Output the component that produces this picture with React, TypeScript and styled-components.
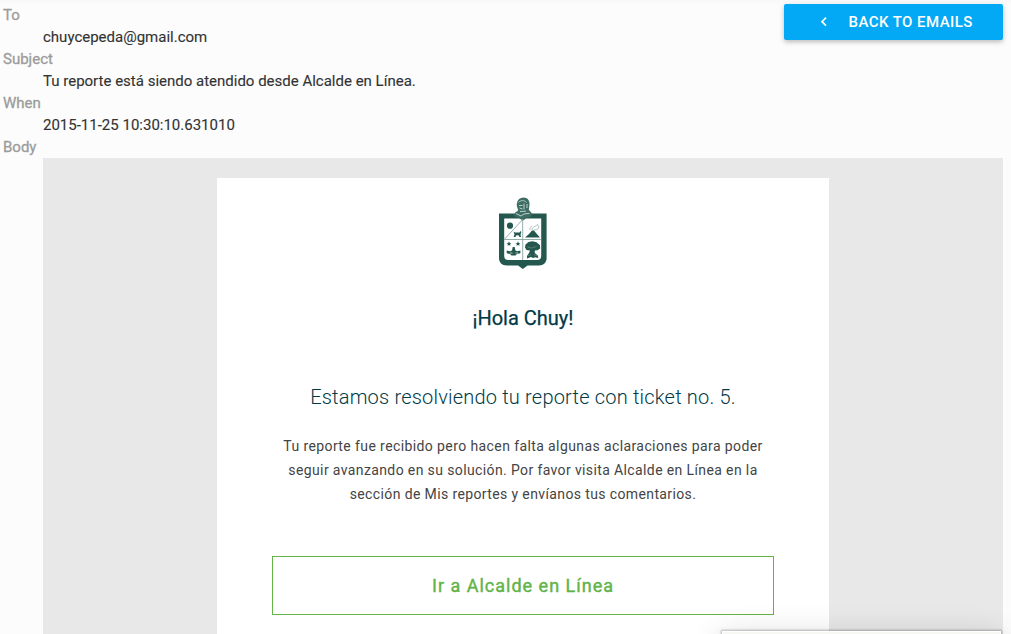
import React from "react";
import styled, { createGlobalStyle } from "styled-components";

const GlobalStyle = createGlobalStyle`
  * { box-sizing: border-box; }
  html, body { margin: 0; height: 100%; overflow: hidden; }
  body { background: #fcfcfc; font-family: Roboto, sans-serif; color: #333; }
`;

const Page = styled.main`
  position: relative;
  height: 634px;
  overflow: hidden;
  padding: 4px 8px 0 3px;
  background: linear-gradient(#f8f8f8, #fcfcfc 5px);
`;

const Header = styled.header`
  display: flex;
  justify-content: space-between;
  align-items: flex-start;
`;

const Details = styled.dl`
  margin: 0;
  font-size: 15px;
  line-height: 22px;
`;

const Term = styled.dt`
  color: #9b9b9b;
  font-weight: 400;
  -webkit-text-stroke: 0.3px currentColor;
`;

const Value = styled.dd`
  margin: 0 0 0 40px;
  white-space: nowrap;
  -webkit-text-stroke: 0.12px currentColor;
`;

const BackButton = styled.button`
  display: flex;
  align-items: center;
  width: 219px;
  height: 36px;
  padding: 0 0 0 35px;
  gap: 19.5px;
  border: 0;
  border-radius: 2px;
  background: #03a9f4;
  color: #fff;
  font: 500 15px/36px Roboto, sans-serif;
  letter-spacing: 0.45px;
  white-space: nowrap;
  box-shadow: 0 2px 5px rgba(0, 0, 0, 0.26);
`;

const EmailBody = styled.section`
  display: flex;
  justify-content: center;
  align-items: flex-start;
  height: 500px;
  margin-left: 40px;
  padding-top: 20px;
  background: #e8e8e8;
`;

const Card = styled.article`
  display: flex;
  flex-direction: column;
  align-items: center;
  width: 612px;
  height: 480px;
  padding-top: 18px;
  background: #fff;
  color: #003a46;
  text-align: center;
`;

const Greeting = styled.h1`
  margin: 33px 0 0;
  font-size: 20px;
  line-height: 30px;
  font-weight: 400;
  -webkit-text-stroke: 0.25px currentColor;
`;

const Lead = styled.h2`
  margin: 49px 0 0;
  font-size: 20px;
  line-height: 30px;
  font-weight: 300;
  letter-spacing: 0.2px;
  white-space: nowrap;
`;

const Message = styled.p`
  margin: 22px 0 0;
  color: #444;
  font-size: 14px;
  line-height: 24px;
`;

const Line = styled.span<{ $spacing: number }>`
  display: block;
  white-space: nowrap;
  letter-spacing: ${(p) => p.$spacing}px;
`;

const Action = styled.a`
  width: 502px;
  height: 59px;
  margin-top: 50px;
  border: 1px solid #62b348;
  color: #62b348;
  font-size: 18px;
  line-height: 58px;
  font-weight: 400;
  letter-spacing: 1px;
  -webkit-text-stroke: 0.4px currentColor;
`;

const Popup = styled.aside`
  position: absolute;
  left: 722px;
  top: 631px;
  width: 279px;
  height: 60px;
  border: 1px solid #fff;
  background: #f7f7f3;
  box-shadow: 0 0 2px 1px rgba(0, 0, 0, 0.26), 0 8px 34px rgba(0, 0, 0, 0.2);
`;

const Crest = () => (
  <svg width="50" height="74" viewBox="0 0 50 74" fill="#24584f" aria-label="Escudo">
    <path d="M1 17.5h47.6V62c0 4.6-3 7.4-7.6 7.4H29.5L24.8 73l-4.7-3.6H8.6C4 69.400 1 66.600 1 62z" />
    <path d="M6.200 22.500h37V60c0 2.700-1.400 4-4 4h-29c-2.600 0-4-1.300-4-4z" fill="#fff" />
    <path d="M16.200 20l1-3.500 3-2-1.400-4.800c-.2-5 2.400-7.900 6.700-8.100 4 0 6.300 2.800 6 7.100l-.7 5 2.900 3.300-.4 3.500-4 1-4.500 3.200-4.500-3.200z" fill="#3d6d63" />
    <path d="M20.500 6.500c2-2.500 6-2.500 8 0M21 9.500h3.500M21.500 12l3 1M26 7.500v6M29 8v4M18 17.500l5 2.500 3-2 5.500-.7M22 15.500l6-.3" fill="none" stroke="#bdd0ca" strokeWidth="1" />
    <path d="M24.700 23v41M6.200 43.500h37M6.200 43.500l18.500-20" fill="none" stroke="#8aa69f" strokeWidth="0.9" />
    <circle cx="12" cy="29.700" r="3.100" />
    <path d="M15.500 35.500l1.500 1h4.500l1-1.500.8 1-.8 2.500.5 2.500h-1.500l-1-1.800h-2l-1.200 1.800h-1.700l.9-2.500zM27 41.500l4-3.500 3-3.500h2l2 2.500 4 4.500z" />
    <path d="M34 34c0-4 4-3 6-6M36 34c4 0 6-2 4-5M32 34c-1-2 1-3 2-4" fill="none" stroke="#a5bbb5" strokeWidth="0.9" />
    <path d="M11 45.300l.7 1.600 1.700.1-1.300 1.100.4 1.700-1.500-.9-1.500.9.4-1.700L8.600 47l1.700-.1zM20 45.300l.7 1.600 1.700.1-1.300 1.100.4 1.700-1.500-.9-1.500.9.4-1.700-1.300-1.100 1.700-.1z" />
    <path d="M14.700 51h2l.7 3.500 2 .8 3-.8v2.700l-3.400.8-1.500 1.500h-4L12 58l-3.300-.8v-2.700l3 .8 2.300-.8z" />
    <path d="M12 57h2.500m3 0H20" stroke="#d2dfdb" strokeWidth="0.8" />
    <path d="M27 51.500l.5-3 3-2.500 4-.8 4 1 3.500 3 .2 3.300-2.700 1.800-2.700.2v2.500l3 2.500.5 2.500-3.300-.8-2 .8-2-1-4 1.500v-2.500l2-3 1-2.500-3.500-.5z" />
    <path d="M29.500 51l4 1 5-1.500M30 59.500l3-.8m3 0 3 1" fill="none" stroke="#6f958c" strokeWidth="0.600" />
  </svg>
);

export default function App() {
  return (
    <>
      <GlobalStyle />
      <Page>
        <Header>
          <Details>
            <Term>To</Term>
            <Value>chuycepeda@gmail.com</Value>
            <Term>Subject</Term>
            <Value>Tu reporte está siendo atendido desde Alcalde en Línea.</Value>
            <Term>When</Term>
            <Value>2015-11-25 10:30:10.631010</Value>
            <Term>Body</Term>
          </Details>
          <BackButton>
            <svg width="10" height="12" viewBox="0 0 10 12" fill="none" stroke="#fff" strokeWidth="1.7">
              <path d="M7 1.700 3 5.700l4 4" />
            </svg>
            BACK TO EMAILS
          </BackButton>
        </Header>
        <EmailBody>
          <Card>
            <Crest />
            <Greeting>¡Hola Chuy!</Greeting>
            <Lead>Estamos resolviendo tu reporte con ticket no. 5.</Lead>
            <Message>
              <Line $spacing={0.4}>Tu reporte fue recibido pero hacen falta algunas aclaraciones para poder</Line>
              <Line $spacing={0.38}>seguir avanzando en su solución. Por favor visita Alcalde en Línea en la</Line>
              <Line $spacing={0.38}>sección de Mis reportes y envíanos tus comentarios.</Line>
            </Message>
            <Action>Ir a Alcalde en Línea</Action>
          </Card>
        </EmailBody>
        <Popup />
      </Page>
    </>
  );
}
